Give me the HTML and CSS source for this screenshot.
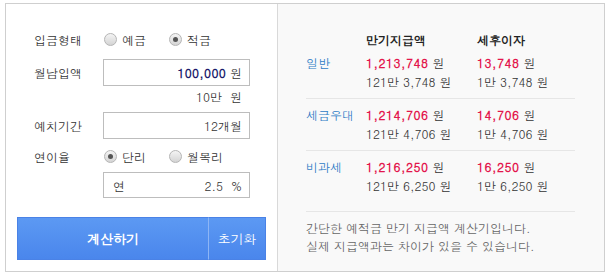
FILE: index.html
```html
<!DOCTYPE html>
<html>

<head>
    <title>예적금 계산기</title>
    <link rel="stylesheet" href="styles.css">
</head>

<body>
    <div class="calc-box">
        <div class="form">
            <div class="row">
                <span class="label">입금형태</span>
                <div class="opts">
                    <label class="radio"><span class="dot"></span>예금</label>
                    <label class="radio on"><span class="dot"></span>적금</label>
                </div>
            </div>
            <div class="row field">
                <span class="label">월납입액</span>
                <div class="box"><b class="amount">100,000</b> 원</div>
            </div>
            <div class="hint">10만&nbsp; 원</div>
            <div class="row field period">
                <span class="label">예치기간</span>
                <div class="box">12개월</div>
            </div>
            <div class="row rate">
                <span class="label">연이율</span>
                <div class="opts">
                    <label class="radio on"><span class="dot"></span>단리</label>
                    <label class="radio"><span class="dot"></span>월복리</label>
                </div>
            </div>
            <div class="row field rate-field">
                <span class="label"></span>
                <div class="box split"><span>연</span><span>2.5 &nbsp;%</span></div>
            </div>
            <div class="actions">
                <button class="btn-calc">계산하기</button>
                <button class="btn-reset">초기화</button>
            </div>
        </div>

        <div class="result">
            <div class="line head">
                <span></span>
                <span>만기지급액</span>
                <span>세후이자</span>
            </div>
            <div class="line item first">
                <span class="kind">일반</span>
                <div><b>1,213,748</b> 원<br>121만 3,748 원</div>
                <div><b>13,748</b> 원<br>1만 3,748 원</div>
            </div>
            <div class="line item">
                <span class="kind">세금우대</span>
                <div><b>1,214,706</b> 원<br>121만 4,706 원</div>
                <div><b>14,706</b> 원<br>1만 4,706 원</div>
            </div>
            <div class="line item last">
                <span class="kind">비과세</span>
                <div><b>1,216,250</b> 원<br>121만 6,250 원</div>
                <div><b>16,250</b> 원<br>1만 6,250 원</div>
            </div>
            <p class="note">간단한 예적금 만기 지급액 계산기입니다.<br>실제 지급액과는 차이가 있을 수 있습니다.</p>
        </div>
    </div>
</body>

</html>
```

FILE: styles.css
```css
/* General */
body {
    margin: 0;
    font-family: Dotum, "Noto Sans CJK KR", sans-serif;
    font-size: 12px;
    color: #333;
}

.calc-box {
    display: flex;
    width: 600px;
    height: 269px;
    margin: 3px 0 0 5px;
    border: 1px solid #cfcfcf;
    box-sizing: border-box;
}

/* Left form */
.form {
    width: 272px;
    padding: 25px 11px 0;
    box-sizing: border-box;
    border-right: 1px solid #d9d9d9;
}

.row {
    display: flex;
    align-items: center;
    height: 20px;
    padding-left: 17px;
}

.label {
    width: 69px;
    flex: none;
}

.opts {
    display: flex;
    gap: 22px;
}

.radio {
    display: flex;
    align-items: center;
    gap: 5px;
}

.dot {
    width: 11px;
    height: 11px;
    margin-left: 1px;
    border: 1px solid #b5b5b5;
    border-radius: 50%;
    background: linear-gradient(#f4f4f4, #d4d4d4);
    display: flex;
    align-items: center;
    justify-content: center;
}

.radio.on .dot::after {
    content: "";
    width: 5px;
    height: 5px;
    border-radius: 50%;
    background: #555;
}

.field {
    height: 27px;
    margin-top: 10px;
}

.box {
    width: 147px;
    height: 27px;
    box-sizing: border-box;
    border: 1px solid #bdbdbd;
    background: #fff;
    padding: 0 7px 0 9px;
    display: flex;
    align-items: center;
    justify-content: flex-end;
}

.box.split {
    justify-content: space-between;
}

.amount {
    color: #1b1b6b;
    margin-right: 4px;
    letter-spacing: 0.3px;
}

.hint {
    height: 18px;
    line-height: 18px;
    margin-top: 2px;
    width: 225px;
    text-align: right;
}

.period {
    margin-top: 6px;
}

.rate {
    margin-top: 7px;
}

.rate-field {
    margin-top: 6px;
    height: 26px;
}

.rate-field .box {
    height: 26px;
}

/* Buttons */
.actions {
    display: flex;
    margin-top: 19px;
    height: 43px;
}

.actions button {
    font-family: inherit;
    font-size: 13px;
    color: #fff;
    border: 1px solid #4a82e6;
    background: linear-gradient(#5c99f3, #4a86ec);
    cursor: pointer;
}

.btn-calc {
    width: 192px;
    font-weight: bold;
    border-right-color: #8db5f5 !important;
}

.btn-reset {
    width: 57px;
    border-left: none !important;
}

/* Right result */
.result {
    flex: 1;
    background: #f9f9f9;
    padding: 26px 29px 0 28px;
}

.line {
    display: grid;
    grid-template-columns: 60px 111px 1fr;
    line-height: 19px;
}

.head {
    font-weight: bold;
    color: #222;
}

.item {
    padding: 6px 0 7px;
    border-bottom: 1px solid #e6e6e6;
}

.item.first {
    padding-top: 4px;
}

.item.last {
    border-bottom: none;
}

.kind {
    color: #2f7cc6;
}

.item b {
    color: #e3164d;
    letter-spacing: 0.5px;
}

.note {
    margin: 9px 0 0;
    padding-top: 7px;
    border-top: 1px solid #e6e6e6;
    color: #666;
    line-height: 18px;
}
```
